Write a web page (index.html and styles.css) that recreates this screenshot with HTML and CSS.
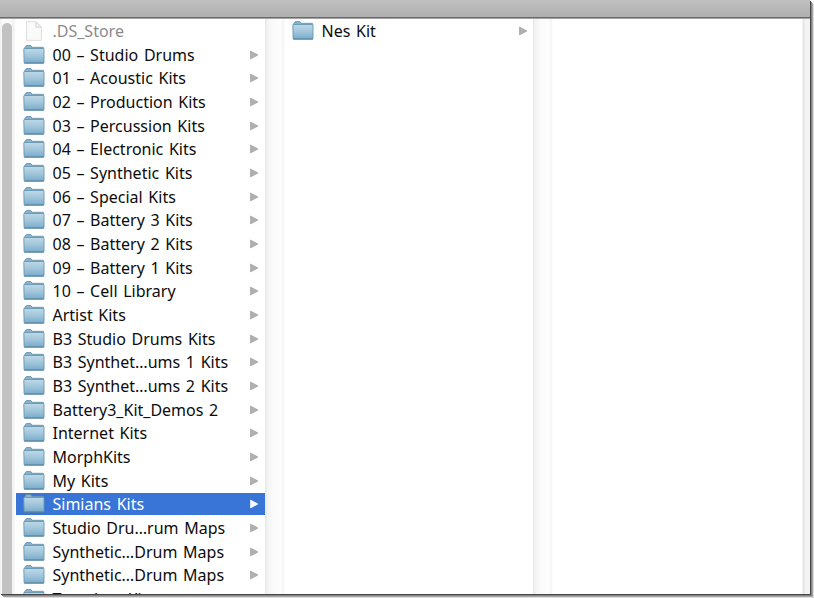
FILE: index.html
```html
<!DOCTYPE html>
<html lang="en">
<head>
<meta charset="utf-8">
<title>Battery Kits</title>
<link rel="stylesheet" href="styles.css">
</head>
<body>
<svg class="defs" aria-hidden="true">
  <defs>
    <linearGradient id="front" x1="0" y1="0" x2="0" y2="1">
      <stop offset="0" stop-color="#bfd9e7"/><stop offset=".5" stop-color="#a0c5db"/><stop offset="1" stop-color="#7aabc9"/>
    </linearGradient>
    <symbol id="folder" viewBox="0 0 22 20">
      <path d="M1.5 5V3Q1.5 2.5 2.2 2.3L2.8 1Q3 .5 3.7.5H7.4Q8.1.5 8.3 1L8.8 2.3H20Q20.5 2.3 20.5 2.8V5Z" fill="#88b3cb" stroke="#5e8faa" stroke-width=".8"/>
      <path d="M.8 3.9Q.8 3.5 1.2 3.5H20.6Q21 3.5 21 3.9V17.6Q21 18 20.5 18H1.5Q1.1 18 1.1 17.6Z" fill="url(#front)" stroke="#6797b3" stroke-width=".9"/>
      <path d="M1.2 18.1H20.8" stroke="#4f7f9e"/>
    </symbol>
    <symbol id="file" viewBox="0 0 22 20">
      <path d="M3.5.6H13L18.4 6V19.4H3.5Z" fill="#fafafa" stroke="#dcdcdc" stroke-width=".9"/>
      <path d="M12.8.8V6.2H18.2Z" fill="#f0f0f0" stroke="#d2d2d2" stroke-width=".8"/>
    </symbol>
    <symbol id="arrow" viewBox="0 0 10 10">
      <path d="M1.5 1L9 5L1.5 9Z"/>
    </symbol>
  </defs>
</svg>
<div class="window">
  <div class="toolbar"></div>
  <main class="browser">
    <div class="scroll"><div class="thumb"></div></div>
    <ul class="column" id="kits">
      <li class="row muted"><svg class="icon"><use href="#file"/></svg><span class="name">.DS_Store</span></li>
      <li class="row"><svg class="icon"><use href="#folder"/></svg><span class="name">00 – Studio Drums</span><svg class="arrow"><use href="#arrow"/></svg></li>
      <li class="row"><svg class="icon"><use href="#folder"/></svg><span class="name">01 – Acoustic Kits</span><svg class="arrow"><use href="#arrow"/></svg></li>
      <li class="row"><svg class="icon"><use href="#folder"/></svg><span class="name">02 – Production Kits</span><svg class="arrow"><use href="#arrow"/></svg></li>
      <li class="row"><svg class="icon"><use href="#folder"/></svg><span class="name">03 – Percussion Kits</span><svg class="arrow"><use href="#arrow"/></svg></li>
      <li class="row"><svg class="icon"><use href="#folder"/></svg><span class="name">04 – Electronic Kits</span><svg class="arrow"><use href="#arrow"/></svg></li>
      <li class="row"><svg class="icon"><use href="#folder"/></svg><span class="name">05 – Synthetic Kits</span><svg class="arrow"><use href="#arrow"/></svg></li>
      <li class="row"><svg class="icon"><use href="#folder"/></svg><span class="name">06 – Special Kits</span><svg class="arrow"><use href="#arrow"/></svg></li>
      <li class="row"><svg class="icon"><use href="#folder"/></svg><span class="name">07 – Battery 3 Kits</span><svg class="arrow"><use href="#arrow"/></svg></li>
      <li class="row"><svg class="icon"><use href="#folder"/></svg><span class="name">08 – Battery 2 Kits</span><svg class="arrow"><use href="#arrow"/></svg></li>
      <li class="row"><svg class="icon"><use href="#folder"/></svg><span class="name">09 – Battery 1 Kits</span><svg class="arrow"><use href="#arrow"/></svg></li>
      <li class="row"><svg class="icon"><use href="#folder"/></svg><span class="name">10 – Cell Library</span><svg class="arrow"><use href="#arrow"/></svg></li>
      <li class="row"><svg class="icon"><use href="#folder"/></svg><span class="name">Artist Kits</span><svg class="arrow"><use href="#arrow"/></svg></li>
      <li class="row"><svg class="icon"><use href="#folder"/></svg><span class="name">B3 Studio Drums Kits</span><svg class="arrow"><use href="#arrow"/></svg></li>
      <li class="row"><svg class="icon"><use href="#folder"/></svg><span class="name">B3 Synthet…ums 1 Kits</span><svg class="arrow"><use href="#arrow"/></svg></li>
      <li class="row"><svg class="icon"><use href="#folder"/></svg><span class="name">B3 Synthet…ums 2 Kits</span><svg class="arrow"><use href="#arrow"/></svg></li>
      <li class="row"><svg class="icon"><use href="#folder"/></svg><span class="name">Battery3_Kit_Demos 2</span><svg class="arrow"><use href="#arrow"/></svg></li>
      <li class="row"><svg class="icon"><use href="#folder"/></svg><span class="name">Internet Kits</span><svg class="arrow"><use href="#arrow"/></svg></li>
      <li class="row"><svg class="icon"><use href="#folder"/></svg><span class="name">MorphKits</span><svg class="arrow"><use href="#arrow"/></svg></li>
      <li class="row"><svg class="icon"><use href="#folder"/></svg><span class="name">My Kits</span><svg class="arrow"><use href="#arrow"/></svg></li>
      <li class="row selected"><svg class="icon"><use href="#folder"/></svg><span class="name">Simians Kits</span><svg class="arrow"><use href="#arrow"/></svg></li>
      <li class="row"><svg class="icon"><use href="#folder"/></svg><span class="name">Studio Dru…rum Maps</span><svg class="arrow"><use href="#arrow"/></svg></li>
      <li class="row"><svg class="icon"><use href="#folder"/></svg><span class="name">Synthetic…Drum Maps</span><svg class="arrow"><use href="#arrow"/></svg></li>
      <li class="row"><svg class="icon"><use href="#folder"/></svg><span class="name">Synthetic…Drum Maps</span><svg class="arrow"><use href="#arrow"/></svg></li>
      <li class="row"><svg class="icon"><use href="#folder"/></svg><span class="name">Template Kits</span><svg class="arrow"><use href="#arrow"/></svg></li>
    </ul>
    <div class="gutter"></div>
    <ul class="column second">
      <li class="row"><svg class="icon"><use href="#folder"/></svg><span class="name">Nes Kit</span><svg class="arrow"><use href="#arrow"/></svg></li>
    </ul>
    <div class="gutter"></div>
    <ul class="column"></ul>
    <div class="edge"></div>
  </main>
</div>
</body>
</html>
```
FILE: styles.css
```css
* { box-sizing: border-box; }
body { margin: 0; width: 814px; height: 598px; overflow: hidden; background: #fff; }
.defs { display: block; width: 0; height: 0; position: absolute; }
.window {
  width: 810px; height: 594px;
  display: flex; flex-direction: column;
  background: #fff;
  box-shadow: 1px 1px 0 #464646, 2px 2px 0 #858585, 3px 3px 0 #a6a6a6, 4px 4px 0 #dedede;
}
.toolbar {
  flex: none; height: 19px;
  background: linear-gradient(#c0c0c0, #b0b0b0 16px);
  border-bottom: 1px solid #a4a4a4;
  box-shadow: inset 0 -1px 0 #6a6a6a;
}
.browser {
  flex: 1; min-height: 0; overflow: hidden;
  display: grid;
  grid-template-columns: 16px 249px 20px 248px 20px 249px 8px;
}
.scroll {
  padding: 4px 0 0 2px;
  background: linear-gradient(90deg, #f2f2f2 0 1px, #fafafa 2px 12px, #eee 13px, #f6f6f6 14px, #fff 16px);
}
.thumb { width: 10px; height: 590px; border-radius: 5px; background: #c2c2c2; }
.column { margin: 0; padding: 0; list-style: none; min-width: 0; }
.row {
  display: flex; align-items: center;
  height: 23.68px; padding: 0 6px 0 7px;
  font: 16px/22px "Noto Sans", sans-serif;
  color: #0c0c0c;
}
.second .row { padding: 0 5px 0 7px; }
.name { flex: 1; margin: 0 0 0 7.5px; white-space: pre; word-spacing: 1.5px; }
.icon { flex: none; width: 22px; height: 20px; }
.arrow { flex: none; width: 10px; height: 10px; fill: #b0b0b0; stroke: #989898; stroke-width: .6; }
.muted { color: #8b8b8b; }
.selected {
  background: linear-gradient(#3875d7, #3875d7) 0 .6px / 100% 22.4px no-repeat;
  color: #fff;
}
.selected .arrow { fill: #fff; stroke: #fff; }
.gutter {
  background: linear-gradient(90deg, #e8e8e8 0 1px, #f3f3f3 2px, #fafafa 8px, #fdfdfd 16px, #f3f3f3 18px, #fafafa 19px, #fff);
}
.edge { background: linear-gradient(90deg, #f4f4f4 0 1px, #e3e3e3 1px 2px, #f3f3f3 3px); }
```
